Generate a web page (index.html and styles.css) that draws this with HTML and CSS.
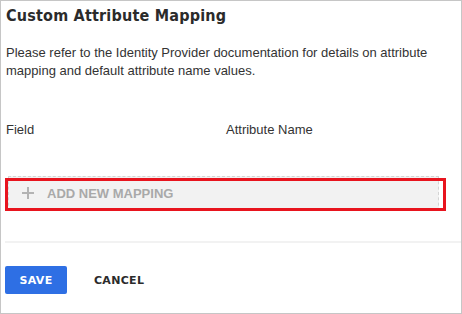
FILE: index.html
```html
<!DOCTYPE html>
<html lang="en">
<head>
  <meta charset="UTF-8" />
  <title>Custom Attribute Mapping</title>
  <link rel="stylesheet" href="styles.css">
</head>
<body>
  <div class="panel">
    <h2 class="title">Custom Attribute Mapping</h2>
    <p class="intro">Please refer to the Identity Provider documentation for details on attribute mapping and default attribute name values.</p>

    <div class="columns">
      <span class="col-field">Field</span>
      <span class="col-attr">Attribute Name</span>
    </div>

    <div class="add-wrap">
      <button class="add-btn">
        <svg class="plus" width="12" height="12" viewBox="0 0 12 12">
          <path d="M6 0v12M0 6h12" stroke="#b3b3b3" stroke-width="2" fill="none"/>
        </svg>
        ADD NEW MAPPING
      </button>
      <div class="highlight"></div>
    </div>

    <hr class="divider" />

    <div class="actions">
      <button class="save-btn">SAVE</button>
      <button class="cancel-btn">CANCEL</button>
    </div>
  </div>
</body>
</html>
```

FILE: styles.css
```css
body {
  margin: 0;
  background: #fff;
}

.panel {
  box-sizing: border-box;
  width: 462px;
  height: 314px;
  border: 1px solid #c6c6c6;
  padding: 0 0 0 4px;
  font-family: "Liberation Sans", Arial, sans-serif;
  color: #333;
}

.title {
  margin: 4px 0 0 1px;
  font-family: "DejaVu Sans Condensed", "DejaVu Sans", sans-serif;
  font-size: 16px;
  font-weight: bold;
  letter-spacing: 0.2px;
  color: #2b2b2b;
  line-height: 22px;
}

.intro {
  margin: 17px 0 0 1px;
  font-size: 13px;
  line-height: 18px;
  color: #333;
}

.columns {
  display: flex;
  margin: 41px 0 0 1px;
  font-size: 13px;
  line-height: 18px;
}

.col-field {
  width: 220px;
}

.add-wrap {
  position: relative;
  margin: 37px 0 0 3px;
  width: 431px;
}

.add-btn {
  display: flex;
  align-items: center;
  width: 100%;
  height: 35px;
  box-sizing: border-box;
  border: 1px dashed #d4d4d4;
  background: #f2f2f2;
  padding: 0 0 1px 13px;
  font-family: "Liberation Sans", Arial, sans-serif;
  font-size: 13px;
  font-weight: bold;
  color: #a9a9a9;
  text-align: left;
}

.plus {
  margin-right: 13px;
  flex: none;
}

.highlight {
  position: absolute;
  left: -3px;
  top: 2px;
  width: 441px;
  height: 33px;
  box-sizing: border-box;
  border: 3px solid #e8141e;
}

.divider {
  margin: 30px 0 0 0;
  border: none;
  border-top: 2px solid #f2f2f2;
}

.actions {
  display: flex;
  align-items: center;
  margin-top: 23px;
}

.save-btn {
  width: 62px;
  height: 28px;
  border: none;
  border-radius: 2px;
  background: #2e6fe4;
  color: #fff;
  font-family: "DejaVu Sans", sans-serif;
  font-size: 11px;
  font-weight: bold;
  letter-spacing: 0.3px;
}

.cancel-btn {
  margin-left: 27px;
  border: none;
  background: none;
  padding: 0;
  color: #2b2b2b;
  font-family: "DejaVu Sans", sans-serif;
  font-size: 11px;
  font-weight: bold;
  letter-spacing: 0.3px;
}
```
